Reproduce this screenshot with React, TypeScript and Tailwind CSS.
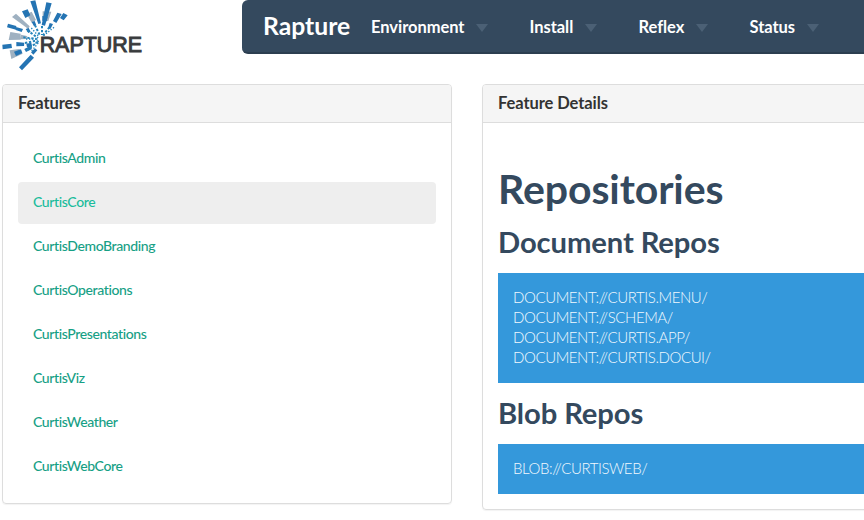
import React from "react";

const features = [
  "CurtisAdmin",
  "CurtisCore",
  "CurtisDemoBranding",
  "CurtisOperations",
  "CurtisPresentations",
  "CurtisViz",
  "CurtisWeather",
  "CurtisWebCore",
];

const menu = [
  { label: "Environment", width: "w-[158.5px]" },
  { label: "Install", width: "w-[109px]" },
  { label: "Reflex", width: "w-[111px]" },
  { label: "Status", width: "w-[111px]" },
];

function Logo() {
  return (
    <svg width="150" height="84" viewBox="0 0 450 252" className="shrink-0">
      <g fill="#9fb1c1">
        <path d="M36 51l12-10 41 38-4 8z" />
        <path d="M80 42l15-7 13 25-13 8zM128 34l26 1-9 28h-17z" />
        <path d="M31 96l31 5v18l-36 1zM63 104l18 4-1 9-18 1z" />
        <path d="M29 151l29-4 10 14-34 16z" />
      </g>
      <g fill="#2474b3">
        <path d="M91 4l15-3 17 69-8 2zM139 7l16 3-20 67-10-2z" />
        <path d="M66 34l17-6 8 18-15 8zM127 48l16 2-3 14-13-2z" />
        <path d="M172 38l13 4-16 27-10-6zM190 39l13 7-12 15-11-7z" />
        <path d="M24 71l25 7-1 11-27-7zM48 81l21 6-4 9-18-6z" />
        <path d="M7 134l27-3 2 13-28 4zM49 126l24 2-1 10-23 1z" />
        <path d="M57 202l35-38 10 9-36 38zM42 155l21-7 4 11-19 9z" />
        <path d="M77 87l9-3 6 11-7 4zM95 66l9-3 5 13-7 3zM149 69l10 3-8 16-7-3z" />
        <path d="M79 131l15-3 2 10-15 4zM73 147l18-9 5 9-18 9zM93 157l12-12 7 6-12 13z" />
      </g>
      <g fill="none" stroke="#2384ba">
        <path strokeWidth="6" strokeDasharray="7 5" d="M82 91l32 23M70 112l40 5M75 129l38-8M80 151l36-28M105 76l15 31M126 78v27M148 82l-20 25" />
        <path strokeWidth="4" strokeDasharray="4 5" d="M94 84l22 25M78 117h35M92 141l24-18M162 82l-31 25M95 153l21-26" />
      </g>
      <text x="119" y="157" textLength="307" lengthAdjust="spacingAndGlyphs" className="fill-[#393b3d] stroke-[#393b3d] stroke-[3px] font-['Liberation_Sans',sans-serif] text-[67px] font-normal">
        RAPTURE
      </text>
    </svg>
  );
}

function RepoBlock({ title, paths }: { title: string; paths: string[] }) {
  return (
    <section>
      <h2 className="mb-[15px] text-[29.2px] leading-[32px] font-bold tracking-[-0.1px] text-[#34495e]">{title}</h2>
      <div className="bg-[#3498db] px-[15px] pt-[14px] pb-4 text-[15px] leading-5 font-light tracking-[-0.42px] text-[#f2f9fe]">
        {paths.map((path) => (
          <p key={path}>{path}</p>
        ))}
      </div>
    </section>
  );
}

function PanelTitle({ children }: { children: React.ReactNode }) {
  return (
    <h3 className="h-[38px] rounded-t-[3px] border-b border-[#ddd] bg-[#f5f5f5] px-[15px] text-[16.5px] leading-[37px] font-bold tracking-[-0.08px]">
      {children}
    </h3>
  );
}

export default function App() {
  return (
    <div className="h-[520px] w-[864px] overflow-hidden bg-white font-['Lato',sans-serif] text-[#333]">
      <header className="flex h-[84px] items-start">
        <Logo />
        <nav className="ml-[92px] flex h-[54px] flex-1 items-center rounded-l-[6px] border-b-2 border-[#2c3e50] bg-[#34495e] pl-[21px] text-white">
          <span className="w-[108px] text-[24.7px] leading-8 font-bold">Rapture</span>
          {menu.map((item) => (
            <div key={item.label} className={"flex shrink-0 items-center gap-[12px] pt-0.5 text-[16.5px] leading-6 font-bold tracking-[-0.05px] " + item.width}>
              {item.label}
              <span className="mt-0.5 h-0 w-0 border-x-[6px] border-t-[8px] border-x-transparent border-t-[#4b6075]" />
            </div>
          ))}
        </nav>
      </header>
      <main className="ml-0.5 flex items-start gap-[30px]">
        <section className="h-[420px] w-[450px] shrink-0 rounded-[4px] border border-[#ddd] shadow-[0_1px_1px_rgba(0,0,0,0.05)]">
          <PanelTitle>Features</PanelTitle>
          <ul className="flex flex-col gap-0.5 p-[15px]">
            {features.map((name) => (
              <li
                key={name}
                className={
                  name === "CurtisCore"
                    ? "h-[42px] rounded-[4px] bg-[#eee] px-[15px] text-[14px] leading-[40px] font-medium tracking-[-0.38px] text-[#1abc9c]"
                    : "h-[42px] px-[15px] text-[14px] leading-[40px] font-medium tracking-[-0.38px] text-[#16a085]"
                }
              >
                {name}
              </li>
            ))}
          </ul>
        </section>
        <section className="h-[426px] w-[480px] shrink-0 rounded-[4px] border border-[#ddd] shadow-[0_1px_1px_rgba(0,0,0,0.05)]">
          <PanelTitle>Feature Details</PanelTitle>
          <div className="px-[15px] pt-[43px]">
            <h1 className="mb-[14px] text-[41px] leading-[46px] font-bold tracking-[-0.08px] text-[#34495e]">Repositories</h1>
            <div className="flex flex-col gap-[14px]">
              <RepoBlock
                title="Document Repos"
                paths={["DOCUMENT://CURTIS.MENU/", "DOCUMENT://SCHEMA/", "DOCUMENT://CURTIS.APP/", "DOCUMENT://CURTIS.DOCUI/"]}
              />
              <RepoBlock title="Blob Repos" paths={["BLOB://CURTISWEB/"]} />
            </div>
          </div>
        </section>
      </main>
    </div>
  );
}
